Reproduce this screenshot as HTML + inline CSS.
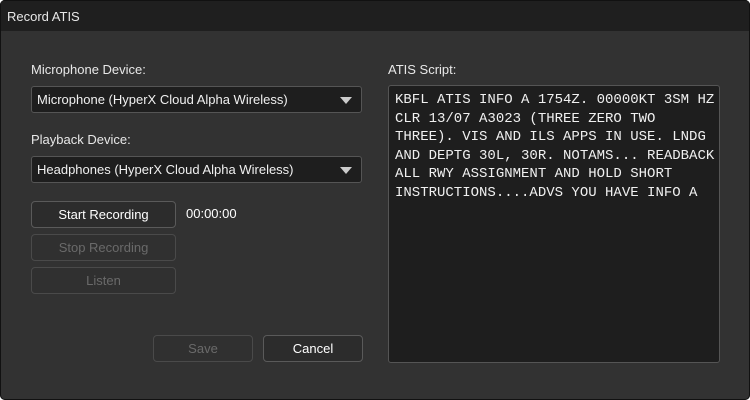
<!DOCTYPE html>
<html><head><style>
*{box-sizing:border-box;margin:0;padding:0}
body{width:750px;height:400px;background:#fff;font-family:"Liberation Sans",sans-serif;overflow:hidden}
.win{position:absolute;left:0;top:0;width:750px;height:400px;background:#323232;border-radius:5px;overflow:hidden;box-shadow:inset 0 0 0 1px #111}
.title{position:absolute;left:0;top:0;width:100%;height:31px;background:#1f1f1f;color:#e8e8e8;font-size:13px;line-height:31px;padding-left:6px;border-top:1px solid #111;border-left:1px solid #111;border-right:1px solid #111}
.lbl{position:absolute;color:#e8e8e8;font-size:13px}
.dd{position:absolute;left:31px;width:331px;height:27px;background:#1e1e1e;border:1px solid #555;border-radius:3px;color:#f0f0f0;font-size:13px;line-height:25px;padding-left:5px}
.dd:after{content:"";position:absolute;right:9px;top:10px;border-left:6px solid transparent;border-right:6px solid transparent;border-top:7px solid #ccc}
.btn{position:absolute;height:27px;border:1px solid #5a5a5a;border-radius:4px;background:#2c2c2c;color:#fff;font-size:13px;text-align:center;line-height:25px}
.dis{color:#6a6a6a;border-color:#4a4a4a;background:#303030}
.ta{position:absolute;left:388px;top:85px;width:332px;height:278px;background:#1e1e1e;border:1px solid #555;border-radius:3px;color:#f0f0f0;font-family:"Liberation Mono",monospace;font-size:14px;line-height:18.6px;padding:5px 6px;white-space:pre}
</style></head><body>
<div class="win">
<div class="title">Record ATIS</div>
<div class="lbl" style="left:31px;top:62px">Microphone Device:</div>
<div class="dd" style="top:86px">Microphone (HyperX Cloud Alpha Wireless)</div>
<div class="lbl" style="left:31px;top:132px">Playback Device:</div>
<div class="dd" style="top:156px">Headphones (HyperX Cloud Alpha Wireless)</div>
<div class="btn" style="left:31px;top:201px;width:145px">Start Recording</div>
<div class="lbl" style="left:186px;top:206px;color:#fff">00:00:00</div>
<div class="btn dis" style="left:31px;top:234px;width:145px">Stop Recording</div>
<div class="btn dis" style="left:31px;top:267px;width:145px">Listen</div>
<div class="btn dis" style="left:153px;top:335px;width:100px">Save</div>
<div class="btn" style="left:263px;top:335px;width:100px">Cancel</div>
<div class="lbl" style="left:388px;top:62px">ATIS Script:</div>
<div class="ta">KBFL ATIS INFO A 1754Z. 00000KT 3SM HZ
CLR 13/07 A3023 (THREE ZERO TWO
THREE). VIS AND ILS APPS IN USE. LNDG
AND DEPTG 30L, 30R. NOTAMS... READBACK
ALL RWY ASSIGNMENT AND HOLD SHORT
INSTRUCTIONS....ADVS YOU HAVE INFO A</div>
</div>
</body></html>
